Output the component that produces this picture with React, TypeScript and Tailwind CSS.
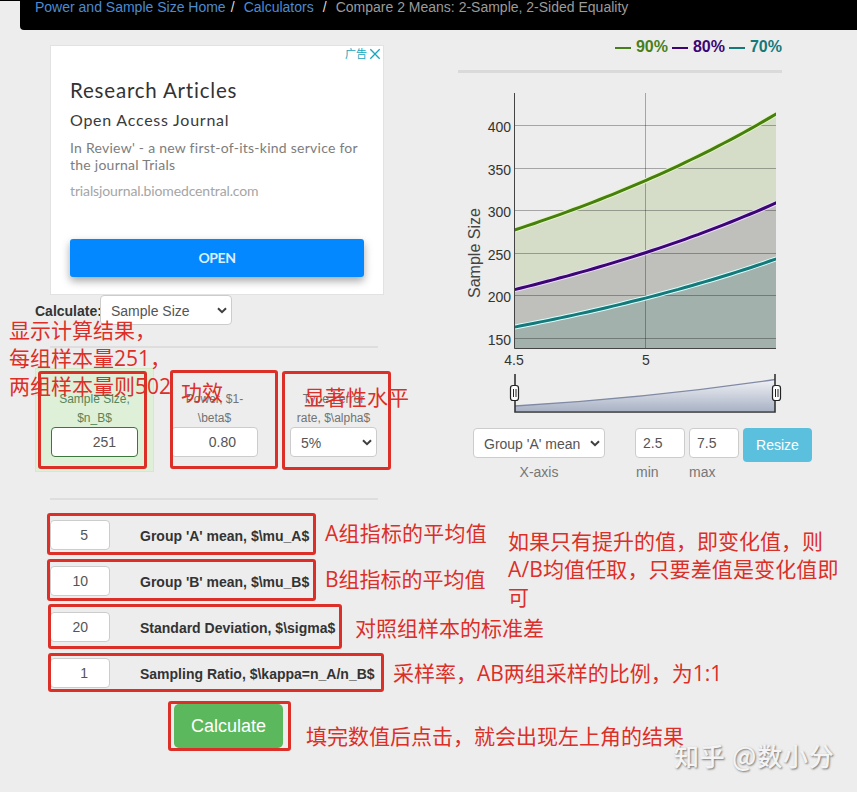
import type { ReactNode } from "react";

const ARIAL = "font-['Liberation_Sans',Arial,sans-serif]";
const NOTE_FONT = "font-['Open_Sans','Noto_Sans_CJK_SC',sans-serif]";

function Chevron({ className = "" }: { className?: string }) {
  return (
    <svg className={className} width="10" height="7" viewBox="0 0 10 7" fill="none">
      <path d="M1 1.2 L5 5.2 L9 1.2" stroke="#3f3f3f" strokeWidth="2" />
    </svg>
  );
}

function Field({ className = "", border = "border-[#ccc]", children }: { className?: string; border?: string; children: ReactNode }) {
  return (
    <div className={`flex h-[30px] items-center rounded border bg-white text-sm text-[#555] ${border} ${className}`}>
      {children}
    </div>
  );
}

function Ad() {
  return (
    <section className="ml-[15px] flex h-[250px] w-[334px] flex-col border border-[#e2e2e2] bg-white font-['Lato',sans-serif]">
      <div className="flex h-[15px] items-center justify-end gap-[2px] pr-[2px] font-['Noto_Sans_CJK_SC',sans-serif] text-[11px] leading-[15px] text-[#16a5bd]">
        <span>广告</span>
        <svg width="12" height="12" viewBox="0 0 11 11">
          <path d="M1.2 1.2 L9.8 9.8 M9.8 1.2 L1.2 9.8" stroke="#16a5bd" strokeWidth="1.2" />
        </svg>
      </div>
      <div className="flex flex-col pl-[19px] whitespace-nowrap">
        <h2 className="mt-[15px] text-[20.5px] leading-7 tracking-[0.8px] text-[#333]">Research Articles</h2>
        <h3 className="mt-[5px] text-base leading-[21px] tracking-[0.75px] text-[#3a3a3a]">Open Access Journal</h3>
        <p className="mt-[9px] text-sm leading-[17px] tracking-[0.25px] text-[#7d7d7d]">
          In Review' - a new first-of-its-kind service for
          <br />
          the journal Trials
        </p>
        <p className="mt-[9px] text-sm leading-[17px] tracking-[-0.13px] text-[#a5a5a5]">trialsjournal.biomedcentral.com</p>
      </div>
      <div className="mx-[19px] mt-[40px] flex h-[38px] items-center justify-center rounded-[3px] bg-[#0388ff] text-sm text-[#d9f0ff] shadow-[0_4px_9px_rgba(0,0,0,0.35)]">
        <span className="font-bold tracking-[-0.4px]">OPEN</span>
      </div>
    </section>
  );
}

const params = [
  { value: "5", label: "Group 'A' mean, $\\mu_A$" },
  { value: "10", label: "Group 'B' mean, $\\mu_B$" },
  { value: "20", label: "Standard Deviation, $\\sigma$" },
  { value: "1", label: "Sampling Ratio, $\\kappa=n_A/n_B$" },
];

function FormPanel() {
  return (
    <div className="flex w-[458px] flex-col pt-[15px] pl-[35px]">
      <Ad />
      <div className="flex items-center">
        <label className="mt-[2px] w-[65px] text-sm font-bold whitespace-nowrap text-[#333]">Calculate:</label>
        <Field className="w-[132px] justify-between pr-[4px] pl-[10px]">
          <span className="mt-px">Sample Size</span>
          <Chevron />
        </Field>
      </div>
      <hr className="mt-[21px] ml-[15px] w-[328px] border-t-2 border-[#dedede]" />
      <div className="mt-[20px] flex items-start text-xs text-[#737373]">
        <div className="flex h-[104px] w-[119px] flex-col items-center border border-[#d6e9c6] bg-[#dff0d8] pt-[21px] text-[#578558]">
          <div className="w-[87px] text-center text-[12px] leading-[19px]">Sample Size, $n_B$</div>
          <Field border="border-[#3c763d]" className="-mt-px w-[87px] justify-end pr-[21px]">
            251
          </Field>
        </div>
        <div className="ml-[17px] flex w-[87px] flex-col pt-[22px]">
          <div className="text-center text-[12px] leading-[19px]">
            Power, $1-
            <br />
            \beta$
          </div>
          <Field className="-mt-px w-[87px] justify-end pr-[21px]">0.80</Field>
        </div>
        <div className="ml-8 flex w-[87px] flex-col pt-[22px]">
          <div className="text-center text-[12px] leading-[19px] whitespace-nowrap">
            Type I error
            <br />
            rate, $\alpha$
          </div>
          <Field className="-mt-px w-[87px] justify-between pr-[4px] pl-[10px]">
            <span className="mt-px">5%</span>
            <Chevron />
          </Field>
        </div>
      </div>
      <hr className="mt-[26px] ml-[15px] w-[328px] border-t-2 border-[#dedede]" />
      <div className="mt-5 ml-[15px] flex flex-col gap-4">
        {params.map((p) => (
          <div key={p.value} className="flex items-center">
            <Field className="w-[60px] justify-end pr-[21px]">{p.value}</Field>
            <span className="mt-[2px] ml-[30px] text-sm font-bold whitespace-nowrap text-[#333]">{p.label}</span>
          </div>
        ))}
      </div>
      <button className="mt-[16px] ml-[139px] h-[44px] w-[109px] rounded-[5px] bg-[#5cb85c] text-lg text-white">Calculate</button>
    </div>
  );
}

const xAt = (v: number) => 56.5 + (v - 4.5) * 262;
const yAt = (n: number) => 215.5 - (n - 200) * 0.85;

function curve(c: number) {
  const pts: string[] = [];
  for (let i = 0; i <= 40; i++) {
    const v = 4.5 + i / 40;
    pts.push(`${xAt(v).toFixed(1)},${yAt(c / (10 - v) ** 2).toFixed(1)}`);
  }
  return pts.join(" ");
}

const series = [
  { c: 8380, line: "#477f0c", halo: "#e4f5c8", fill: "#d5ddc9" },
  { c: 6260, line: "#3b0673", halo: "#eedcff", fill: "#bfbfbb" },
  { c: 4925, line: "#15797a", halo: "#d9ffff", fill: "#a3b1ad" },
];

const yTicks = [400, 350, 300, 250, 200, 150];

function Handle({ x }: { x: number }) {
  return (
    <g>
      <rect x={x - 4} y="305.5" width="8" height="15" rx="2.5" fill="#fff" stroke="#222" strokeWidth="1.2" />
      <path d={`M${x - 1} 309 V317 M${x + 1.5} 309 V317`} stroke="#222" strokeWidth="1" />
    </g>
  );
}

function Chart() {
  return (
    <svg width="330" height="340" viewBox="0 0 330 340" className={ARIAL}>
      <defs>
        <linearGradient id="range" x1="0" y1="0" x2="0" y2="1">
          <stop offset="0" stopColor="#f0f1f5" />
          <stop offset="1" stopColor="#a9b3c6" />
        </linearGradient>
        <clipPath id="plot">
          <rect x="56" y="0" width="262" height="269" />
        </clipPath>
      </defs>
      <g clipPath="url(#plot)">
        {series.map((s) => (
          <polygon key={s.c} points={`56.5,268.5 ${curve(s.c)} 318.5,268.5`} fill={s.fill} />
        ))}
        {yTicks.map((n) => (
          <path key={n} d={`M57 ${Math.floor(yAt(n)) + 0.5} H318`} stroke="#000" strokeOpacity="0.3" />
        ))}
        <path d="M187.5 13 V268" stroke="#000" strokeOpacity="0.3" />
        {series.map((s) => (
          <g key={s.c} fill="none">
            <polyline points={curve(s.c)} stroke={s.halo} strokeWidth="5" />
            <polyline points={curve(s.c)} stroke={s.line} strokeWidth="3" />
          </g>
        ))}
      </g>
      <path d="M56.5 13 V268.5 H318" fill="none" stroke="#444" />
      <g fontSize="14" fill="#333">
        {yTicks.map((n) => (
          <text key={n} x="53" y={Math.floor(yAt(n)) + 7} textAnchor="end">
            {n}
          </text>
        ))}
        <text x="56" y="285" textAnchor="middle">4.5</text>
        <text x="188" y="285" textAnchor="middle">5</text>
      </g>
      <text transform="translate(22 218) rotate(-90)" fontSize="16" fill="#444" textLength="90">
        Sample Size
      </text>
      <path d="M57 326 Q190 318 317 299.5 V331 H57 Z" fill="url(#range)" />
      <path d="M57 326 Q190 318 317 299.5" fill="none" stroke="#808aa5" strokeWidth="1.3" />
      <path d="M57 294 V332 H317 V294" fill="none" stroke="#333" strokeWidth="1.6" />
      <Handle x={56.5} />
      <Handle x={318.5} />
    </svg>
  );
}

function LegendItem({ name, className }: { name: string; className: string }) {
  return (
    <span className={`flex items-center gap-[5px] ${className}`}>
      <span className="mt-[2px] h-[2px] w-4 bg-current" />
      {name}
    </span>
  );
}

function ChartPanel() {
  return (
    <div className="flex w-[370px] flex-col text-sm">
      <div className="mt-[8px] flex h-[18px] w-[324px] items-center justify-end gap-[4px] text-base leading-[18px] font-bold">
        <LegendItem name="90%" className="text-[#477f1c]" />
        <LegendItem name="80%" className="text-[#3b0673]" />
        <LegendItem name="70%" className="text-[#15797a]" />
      </div>
      <hr className="mt-[14px] w-[324px] border-t-[3px] border-[#dadada]" />
      <div className="mt-[7px] h-[340px]">
        <Chart />
      </div>
      <div className="mt-[8px] ml-[15px] flex items-start text-[#777]">
        <div className="flex flex-col items-center">
          <Field className="w-[132px] justify-between pr-[4px] pl-[10px]">
            <span className="mt-px whitespace-nowrap">Group 'A' mean</span>
            <Chevron />
          </Field>
          <span className="mt-[4px] leading-5">X-axis</span>
        </div>
        <div className="ml-[30px] flex flex-col">
          <Field className="w-[50px] pl-[7px]">2.5</Field>
          <span className="mt-[4px] pl-px leading-5">min</span>
        </div>
        <div className="ml-1 flex flex-col">
          <Field className="w-[50px] pl-[7px]">7.5</Field>
          <span className="mt-[4px] leading-5">max</span>
        </div>
        <button className="ml-1 h-[34px] w-[69px] rounded bg-[#5bc0de] text-sm text-white">Resize</button>
      </div>
    </div>
  );
}

function Mark({ className }: { className: string }) {
  return <div className={`absolute rounded-[3px] border-[3px] border-[#dc2f28] ${className}`} />;
}

function Note({ className, children }: { className: string; children: ReactNode }) {
  return (
    <div className={`absolute text-[21px] leading-[28px] whitespace-nowrap text-[#dc2f28] ${NOTE_FONT} ${className}`}>{children}</div>
  );
}

function Annotations() {
  return (
    <>
      <Mark className="top-[371px] left-[38px] h-[98px] w-[109px]" />
      <Mark className="top-[370px] left-[170px] h-[99px] w-[108px]" />
      <Mark className="top-[371px] left-[282px] h-[99px] w-[109px]" />
      <Mark className="top-[513px] left-[47px] h-[42px] w-[269px]" />
      <Mark className="top-[559px] left-[47px] h-[42px] w-[269px]" />
      <Mark className="top-[604px] left-[48px] h-[45px] w-[294px]" />
      <Mark className="top-[653px] left-[48px] h-[39px] w-[336px]" />
      <Mark className="top-[701px] left-[168px] h-[50px] w-[123px]" />
      <Note className="top-[316px] left-[9px]">
        显示计算结果，
        <br />
        每组样本量251，
        <br />
        两组样本量则502
      </Note>
      <Note className="top-[378px] left-[181px]">功效</Note>
      <Note className="top-[383px] left-[304px]">显著性水平</Note>
      <Note className="top-[519px] left-[325px] tracking-[0.2px]">A组指标的平均值</Note>
      <Note className="top-[565px] left-[325px]">B组指标的平均值</Note>
      <Note className="top-[614px] left-[355px]">对照组样本的标准差</Note>
      <Note className="top-[659px] left-[393px]">采样率，AB两组采样的比例，为1:1</Note>
      <Note className="top-[722px] left-[306px]">填完数值后点击，就会出现左上角的结果</Note>
      <Note className="top-[527px] left-[508px]">
        如果只有提升的值，即变化值，则
        <br />
        <span className="tracking-[0.12px]">A/B均值任取，只要差值是变化值即</span>
        <br />可
      </Note>
      <div className="absolute top-[738px] left-[674px] font-['Noto_Sans_CJK_SC',sans-serif] text-[25px] leading-[34px] font-medium tracking-[0.8px] whitespace-nowrap text-[#f4f4f4] [text-shadow:1px_1px_2px_#777]">
        知乎 @数小分
      </div>
    </>
  );
}

export default function App() {
  return (
    <div className={`relative h-[792px] w-[857px] overflow-hidden bg-[#ededed] ${ARIAL}`}>
      <header className="border-t border-black pl-5">
        <nav className="flex h-[29px] items-start rounded-bl bg-black pl-[15px] text-sm leading-[12px] whitespace-nowrap text-[#9b9b9b]">
          <a className="text-[#4c8bd0]">Power and Sample Size Home</a>
          <span className="w-[18px] pl-[5px] text-[#ddd]">/</span>
          <a className="text-[#4c8bd0]">Calculators</a>
          <span className="w-[22px] pl-[9px] text-[#ddd]">/</span>
          <span>Compare 2 Means: 2-Sample, 2-Sided Equality</span>
        </nav>
      </header>
      <main className="flex items-start">
        <FormPanel />
        <ChartPanel />
      </main>
      <Annotations />
    </div>
  );
}
